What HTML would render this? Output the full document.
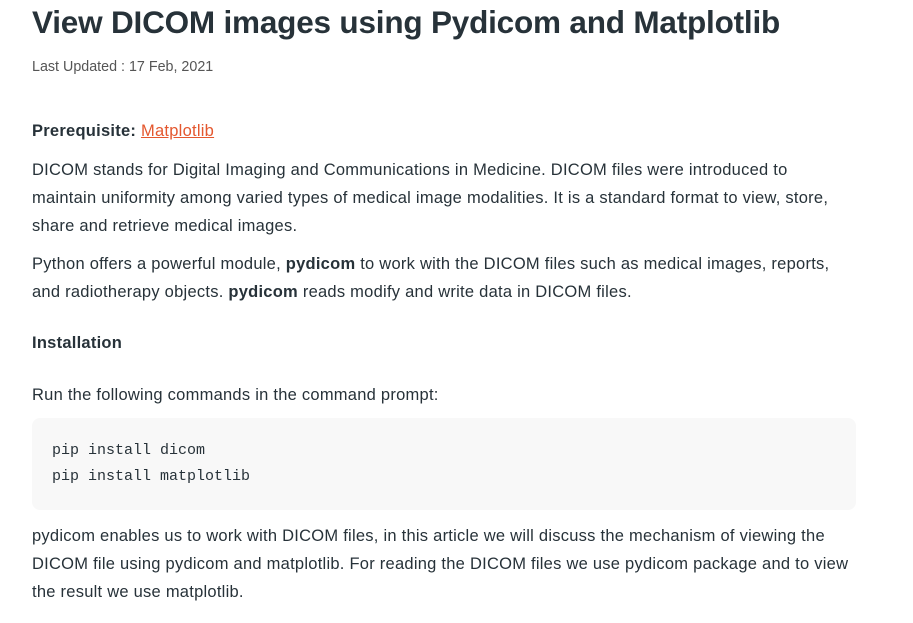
<!DOCTYPE html>
<html><head><meta charset="utf-8"><style>
body{margin:0;width:913px;height:623px;background:#fff;position:relative;overflow:hidden;font-family:"Liberation Sans",sans-serif;color:#273239}
.l{position:absolute;left:32px;white-space:nowrap;font-size:16.5px;letter-spacing:0.25px;line-height:20px}
b{font-weight:bold}
a{color:#e4572e;text-decoration:underline}
.code{position:absolute;left:32px;top:418px;width:824px;height:92px;background:#f8f8f8;border-radius:8px}
.m{position:absolute;left:52px;font-family:"Liberation Mono",monospace;font-size:15px;white-space:nowrap;color:#273239}
</style></head><body>
<div class="l" style="top:2px;font-size:31.5px;line-height:40px;font-weight:bold;letter-spacing:-0.2px">View DICOM images using Pydicom and Matplotlib</div>
<div class="l" style="top:57px;font-size:14.3px;letter-spacing:0;color:#555">Last Updated : 17 Feb, 2021</div>
<div class="l" style="top:121px"><b>Prerequisite:</b> <a>Matplotlib </a></div>
<div class="l" style="top:160px">DICOM stands for Digital Imaging and Communications in Medicine. DICOM files were introduced to</div>
<div class="l" style="top:188px">maintain uniformity among varied types of medical image modalities. It is a standard format to view, store,</div>
<div class="l" style="top:216px">share and retrieve medical images.</div>
<div class="l" style="top:254px">Python offers a powerful module, <b>pydicom</b> to work with the DICOM files such as medical images, reports,</div>
<div class="l" style="top:282px">and radiotherapy objects. <b>pydicom</b> reads modify and write data in DICOM files.</div>
<div class="l" style="top:333px"><b>Installation</b></div>
<div class="l" style="top:385px">Run the following commands in the command prompt:</div>
<div class="code"></div>
<div class="m" style="top:442px">pip install dicom</div>
<div class="m" style="top:468px">pip install matplotlib</div>
<div class="l" style="top:526px">pydicom enables us to work with DICOM files, in this article we will discuss the mechanism of viewing the</div>
<div class="l" style="top:554px">DICOM file using pydicom and matplotlib. For reading the DICOM files we use pydicom package and to view</div>
<div class="l" style="top:582px">the result we use matplotlib.</div>
</body></html>
